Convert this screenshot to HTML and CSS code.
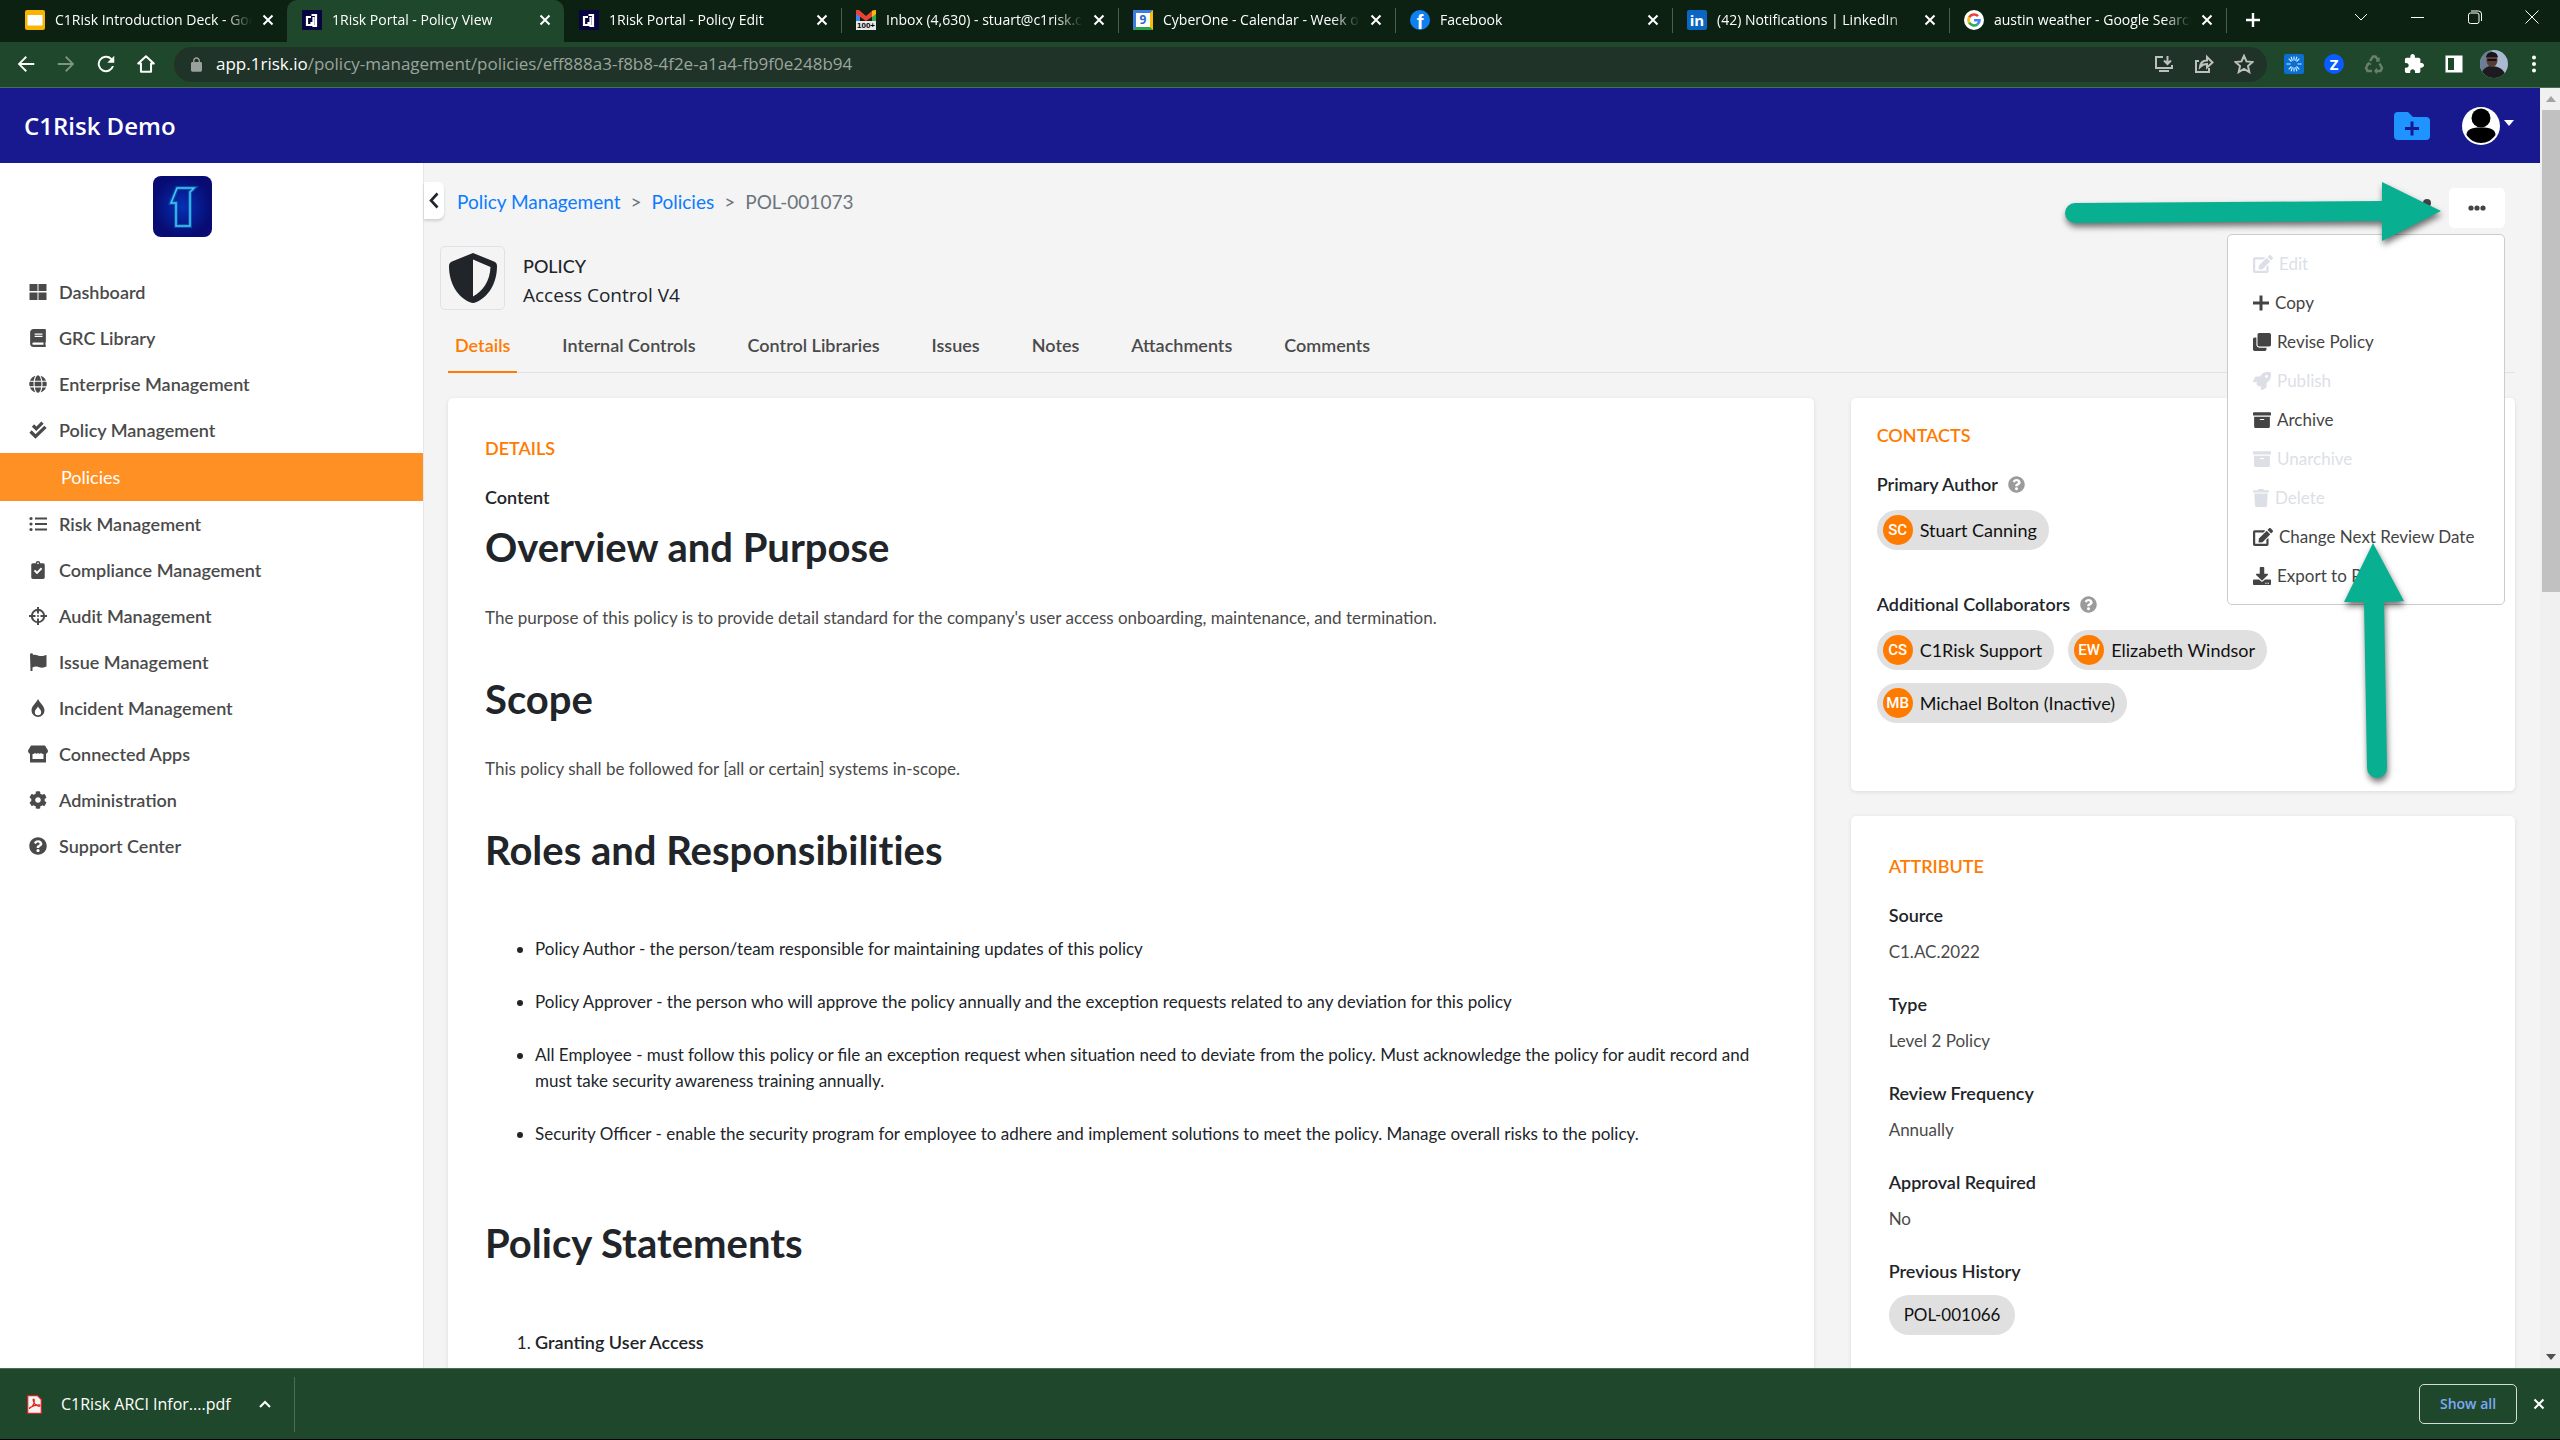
FILE: index.html
```
<!DOCTYPE html>
<html lang="en">
<head>
<meta charset="utf-8">
<title>1Risk Portal - Policy View</title>
<link rel="stylesheet" href="styles.css">
</head>
<body>
<svg class="sprite" aria-hidden="true">
  <symbol id="i-x" viewBox="0 0 12 12"><path d="M1.500 1.500l9 9M10.500 1.500l-9 9" stroke="currentColor" stroke-width="2" fill="none"/></symbol>
  <symbol id="i-help" viewBox="0 0 512 512"><path d="M504 256c0 137-111 248-248 248S8 393 8 256C8 119 119 8 256 8s248 111 248 248zM262.700 90c-54.500 0-89.300 23-116.600 63.800-3.500 5.300-2.400 12.400 2.700 16.200l34.700 26.300c5.200 4 12.600 3 16.700-2.100 17.900-22.700 30.100-35.800 57.300-35.800 20.400 0 45.700 13.100 45.700 33 0 15-12.400 22.700-32.500 34C247.100 238.500 216 254.900 216 296v4c0 6.600 5.400 12 12 12h56c6.600 0 12-5.400 12-12v-1.300c0-28.500 83.200-29.600 83.200-106.700 0-58-60.200-102-116.500-102zM256 338c-25.400 0-46 20.600-46 46 0 25.400 20.600 46 46 46s46-20.600 46-46c0-25.400-20.600-46-46-46z"/></symbol>
  <symbol id="i-edit" viewBox="0 0 576 512"><path d="M402.600 83.200l90.200 90.200c3.800 3.800 3.800 10 0 13.800L274.400 405.600l-92.800 10.300c-12.400 1.400-22.900-9.100-21.500-21.500l10.300-92.800L388.800 83.200c3.800-3.800 10-3.800 13.800 0zm162-22.900l-48.800-48.800c-15.200-15.200-39.900-15.200-55.200 0l-35.400 35.400c-3.800 3.800-3.800 10 0 13.800l90.200 90.200c3.800 3.800 10 3.800 13.800 0l35.400-35.400c15.200-15.300 15.200-40 0-55.200zM384 346.200V448H64V128h229.800c3.200 0 6.200-1.300 8.500-3.500l40-40c7.600-7.600 2.200-20.500-8.500-20.500H48C21.500 64 0 85.500 0 112v352c0 26.500 21.500 48 48 48h352c26.500 0 48-21.500 48-48V306.200c0-10.700-12.900-16-20.500-8.500l-40 40c-2.200 2.300-3.500 5.300-3.500 8.500z"/></symbol>
  <symbol id="i-archive" viewBox="0 0 512 512"><path d="M32 448c0 17.700 14.300 32 32 32h384c17.700 0 32-14.300 32-32V160H32v288zm160-212c0-6.600 5.400-12 12-12h104c6.600 0 12 5.400 12 12v8c0 6.600-5.400 12-12 12H204c-6.600 0-12-5.400-12-12v-8zM480 32H32C14.300 32 0 46.300 0 64v48c0 8.800 7.200 16 16 16h480c8.800 0 16-7.200 16-16V64c0-17.700-14.300-32-32-32z"/></symbol>
</svg>

<header class="browser">
  <div class="tabstrip">
    <div class="tab first">
      <svg class="favicon" viewBox="0 0 20 20"><rect width="20" height="20" rx="2" fill="#f9b400"/><rect x="2.500" y="5" width="15" height="10.500" fill="#fff"/></svg>
      <span class="tab-title">C1Risk Introduction Deck - Google Slides</span>
      <button class="x" aria-label="Close tab"><svg><use href="#i-x"/></svg></button>
    </div>
    <div class="tab active">
      <svg class="favicon" viewBox="0 0 20 20"><rect width="20" height="20" fill="#07053f"/><path d="M9 7H5v8h4.500V12M9.500 5h4.500V16h-2.500V7" fill="none" stroke="#fff" stroke-width="2.200"/></svg>
      <span class="tab-title">1Risk Portal - Policy View</span>
      <button class="x" aria-label="Close tab"><svg><use href="#i-x"/></svg></button>
    </div>
    <div class="tab">
      <svg class="favicon" viewBox="0 0 20 20"><rect width="20" height="20" fill="#07053f"/><path d="M9 7H5v8h4.500V12M9.500 5h4.500V16h-2.500V7" fill="none" stroke="#fff" stroke-width="2.200"/></svg>
      <span class="tab-title">1Risk Portal - Policy Edit</span>
      <button class="x" aria-label="Close tab"><svg><use href="#i-x"/></svg></button>
    </div>
    <div class="tab divided">
      <span class="favicon gmail"><svg viewBox="0 0 20 11"><path d="M0 11V1l4 3v7z" fill="#4285f4"/><path d="M20 11V1l-4 3v7z" fill="#34a853"/><path d="M0 0h3l7 6 7-6h3v4l-10 7L0 4z" fill="#ea4335"/><path d="M16 1l4-1v4l-4 3z" fill="#fbbc04"/></svg><b>100+</b></span>
      <span class="tab-title">Inbox (4,630) - stuart@c1risk.com - Mail</span>
      <button class="x" aria-label="Close tab"><svg><use href="#i-x"/></svg></button>
    </div>
    <div class="tab divided">
      <span class="favicon calendar">9</span>
      <span class="tab-title">CyberOne - Calendar - Week of July</span>
      <button class="x" aria-label="Close tab"><svg><use href="#i-x"/></svg></button>
    </div>
    <div class="tab divided">
      <span class="favicon facebook">f</span>
      <span class="tab-title">Facebook</span>
      <button class="x" aria-label="Close tab"><svg><use href="#i-x"/></svg></button>
    </div>
    <div class="tab divided">
      <span class="favicon linkedin">in</span>
      <span class="tab-title">(42) Notifications | LinkedIn</span>
      <button class="x" aria-label="Close tab"><svg><use href="#i-x"/></svg></button>
    </div>
    <div class="tab divided">
      <svg class="favicon" viewBox="0 0 20 20"><circle cx="10" cy="10" r="10" fill="#fff"/><g fill="none" stroke-width="2.600"><path d="M14 6.200A5.500 5.500 0 0 0 5.200 7.300" stroke="#ea4335"/><path d="M5.200 7.300a5.500 5.500 0 0 0 0 5.400" stroke="#fbbc05"/><path d="M5.200 12.700A5.500 5.500 0 0 0 13.500 14.200" stroke="#34a853"/><path d="M13.500 14.200A5.500 5.500 0 0 0 15.500 10.300H10" stroke="#4285f4"/></g></svg>
      <span class="tab-title">austin weather - Google Search</span>
      <button class="x" aria-label="Close tab"><svg><use href="#i-x"/></svg></button>
    </div>
    <button class="newtab divided" aria-label="New tab"><svg viewBox="0 0 16 16"><path d="M8 1v14M1 8h14" stroke="#fff" stroke-width="2.400"/></svg></button>
    <div class="window-controls">
      <button aria-label="Search tabs"><svg viewBox="0 0 14 14"><path d="M1 4l6 6 6-6"/></svg></button>
      <button aria-label="Minimize"><svg viewBox="0 0 14 14"><path d="M0 7.500h13"/></svg></button>
      <button aria-label="Restore"><svg viewBox="0 0 14 14"><rect x=".5" y="3" width="10.500" height="10.500" rx="2"/><path d="M3 1h7.500a3 3 0 0 1 3 3v7"/></svg></button>
      <button aria-label="Close window"><svg viewBox="0 0 14 14"><path d="M.5.500l13 13M13.500.500l-13 13"/></svg></button>
    </div>
  </div>

  <div class="toolbar">
    <div class="nav-buttons">
      <button aria-label="Back"><svg viewBox="0 0 24 24"><path d="M21 11H6.800l6.200-6.200L11.600 3.400 3 12l8.600 8.600L13 19.200 6.800 13H21z"/></svg></button>
      <button aria-label="Forward" class="dim"><svg viewBox="0 0 24 24"><path d="M3 11h14.200L11 4.800l1.400-1.400L21 12l-8.600 8.600L11 19.200l6.200-6.200H3z"/></svg></button>
      <button aria-label="Reload"><svg viewBox="0 0 24 24"><path d="M18.400 5.600A9 9 0 1 0 20.700 14.300h-2.200A6.900 6.900 0 1 1 16.900 7.100L13.400 10.600H21V3z"/></svg></button>
      <button aria-label="Home"><svg viewBox="0 0 24 24"><path d="M12 3.500l8.500 8h-3V20.500h-11V11.500h-3z" fill="none" stroke="currentColor" stroke-width="2.200" stroke-linejoin="round"/></svg></button>
    </div>
    <div class="omnibox">
      <svg class="lock" viewBox="4 1 16 21"><path d="M18 8h-1V6c0-2.760-2.240-5-5-5S7 3.240 7 6v2H6c-1.100 0-2 .9-2 2v10c0 1.100.9 2 2 2h12c1.100 0 2-.9 2-2V10c0-1.100-.9-2-2-2zM9 6c0-1.660 1.340-3 3-3s3 1.340 3 3v2H9z"/></svg>
      <span class="url"><span class="host">app.1risk.io</span>/policy-management/policies/eff888a3-f8b8-4f2e-a1a4-fb9f0e248b94</span>
      <button aria-label="Install app"><svg viewBox="0 0 20 20"><path d="M9 3H2v11h16v-3M5 17h10M13.500 2v7M10 6.500l3.500 3.500L17 6.500"/></svg></button>
      <button aria-label="Share"><svg viewBox="0 0 20 20"><path d="M5 7H2v11h13v-4M6 13c.5-4 3-6.500 7-6.500V3l5.500 5.500L13 13.500V10c-3 0-5 .8-7 3z"/></svg></button>
      <button aria-label="Bookmark"><svg viewBox="0 0 20 20"><path d="M10 1.800l2.500 5.600 6 .6-4.500 4.100 1.300 6L10 15l-5.300 3.100 1.300-6L1.500 8l6-.6z"/></svg></button>
    </div>
    <div class="extensions">
      <button aria-label="Claap"><svg viewBox="0 0 20 20"><rect width="20" height="20" rx="2" fill="#0a6fd0"/><g stroke="#d7efff" stroke-width="1.100"><path d="M10 2.500v4M10 13.500v4M2.500 10h4M13.500 10h4M4.700 4.700l2.800 2.800M12.500 12.500l2.800 2.800M15.300 4.700l-2.800 2.800M7.500 12.500l-2.800 2.800M7 2.800l1.500 3.800M13 2.800l-1.500 3.800M7 17.200l1.500-3.800M13 17.200l-1.500-3.800"/></g></svg></button>
      <button aria-label="Zoom"><span class="zoom-ext">Z</span></button>
      <button aria-label="Recycle"><svg viewBox="0 0 20 20" fill="none" stroke="#6b7f70" stroke-width="2.400"><path d="M6 7l3-4.500h2.500L14 6M4.500 9.500L2 14l1.500 3H8M15.500 9.500L18 14l-1.500 3h-5" fill="none"/><path d="M12 7h3V3.500M7 10.500L4.500 9 2.500 11M13 14.500L11 17l2 2.500" stroke-width="1.500" fill="none"/></svg></button>
      <button aria-label="Extensions"><svg viewBox="1 1 22 22" fill="#fff"><path d="M20.500 11H19V7c0-1.100-.9-2-2-2h-4V3.500C13 2.120 11.880 1 10.500 1S8 2.120 8 3.500V5H4c-1.100 0-1.990.9-1.990 2v3.800H3.500c1.490 0 2.700 1.210 2.700 2.700s-1.210 2.700-2.700 2.700H2V20c0 1.100.9 2 2 2h3.800v-1.500c0-1.490 1.210-2.700 2.700-2.700 1.490 0 2.700 1.210 2.700 2.700V22H17c1.100 0 2-.9 2-2v-4h1.500c1.380 0 2.500-1.120 2.500-2.500S21.880 11 20.500 11z"/></svg></button>
      <button aria-label="Side panel"><svg viewBox="0 0 20 20"><path d="M1.500 1.500h17v17h-17zM4 4v12h6V4z" fill="#fff" fill-rule="evenodd"/></svg></button>
      <button aria-label="Profile" class="profile"><svg viewBox="0 0 28 28"><clipPath id="pc"><circle cx="14" cy="14" r="14"/></clipPath><g clip-path="url(#pc)"><rect width="28" height="28" fill="#a9bad2"/><path d="M0 28V8L8 0h4v28z" fill="#6d7d93"/><path d="M1 28c0-8 4-11 9-12 10 0 15 4 16 12z" fill="#1d1a20"/><ellipse cx="12" cy="10" rx="5.500" ry="7" fill="#5a3a34"/><path d="M6 8c0-8 12-8 12 0l-1-1H7z" fill="#18151a"/><path d="M7.500 9h9v2h-9z" fill="#111"/></g></svg></button>
      <button aria-label="Menu"><svg viewBox="0 0 20 20" fill="#fff"><circle cx="10" cy="3.500" r="2"/><circle cx="10" cy="10" r="2"/><circle cx="10" cy="16.500" r="2"/></svg></button>
    </div>
  </div>
</header>

<div class="viewport">
<div class="app">
  <header class="app-header">
    <span class="brand">C1Risk Demo</span>
    <button class="folder" aria-label="New item"><svg viewBox="0 0 36 28"><path d="M4 0h10l5 5h13a4 4 0 0 1 4 4v15a4 4 0 0 1-4 4H4a4 4 0 0 1-4-4V4a4 4 0 0 1 4-4z" fill="#1f93ff"/><path d="M18 9.500v14M11 16.500h14" stroke="#19198f" stroke-width="3"/></svg></button>
    <button class="user" aria-label="Account"><svg class="user-pic" viewBox="0 0 38 38"><circle cx="19" cy="19" r="19" fill="#fff"/><circle cx="19" cy="11" r="9.500" fill="#000"/><path d="M4.500 28c0-6 6-7.500 14.500-7.500S33.500 22 33.500 28C30 33 25 36 19 36S8 33 4.500 28z" fill="#000"/></svg><svg class="caret" viewBox="0 0 10 6"><path d="M0 0h10L5 6z" fill="#fff"/></svg></button>
  </header>

  <div class="app-body">
    <aside class="sidebar">
      <svg class="logo" viewBox="0 0 59 61">
        <defs><radialGradient id="lg"><stop offset="0" stop-color="#0630b4"/><stop offset="1" stop-color="#070b72"/></radialGradient></defs>
        <rect width="59" height="61" rx="8" fill="url(#lg)"/>
        <path d="M24 12h17l-4 4v34H23V27h-5z" fill="none" stroke="#1478d8" stroke-width="4" opacity=".5"/>
        <path d="M24 12h17l-4 4v34H23V27h-5z" fill="none" stroke="#45cde8" stroke-width="1.500"/>
      </svg>
      <nav class="side-nav">
        <a href="#"><svg viewBox="0 0 18 18"><path d="M.5 1h8v7h-8zM9.500 1h8v7h-8zM.5 9.500h8V17h-8zM9.500 9.500h8V17h-8z"/></svg>Dashboard</a>
        <a href="#"><svg viewBox="0 0 448 512"><path d="M448 360V24c0-13.300-10.700-24-24-24H96C43 0 0 43 0 96v320c0 53 43 96 96 96h328c13.300 0 24-10.700 24-24v-16c0-7.500-3.500-14.300-8.900-18.700-4.200-15.400-4.200-59.300 0-74.700 5.400-4.300 8.900-11.100 8.900-18.600zM128 134c0-3.300 2.700-6 6-6h212c3.300 0 6 2.700 6 6v20c0 3.300-2.700 6-6 6H134c-3.300 0-6-2.700-6-6v-20zm0 64c0-3.300 2.700-6 6-6h212c3.300 0 6 2.700 6 6v20c0 3.300-2.700 6-6 6H134c-3.300 0-6-2.700-6-6v-20zm253.400 250H96c-17.700 0-32-14.300-32-32 0-17.600 14.400-32 32-32h285.400c-1.900 17.100-1.900 46.900 0 64z"/></svg>GRC Library</a>
        <a href="#"><svg viewBox="0 0 496 512"><path d="M336.500 160C322 70.700 287.800 8 248 8s-74 62.700-88.500 152h177zM152 256c0 22.200 1.200 43.500 3.300 64h185.300c2.100-20.500 3.300-41.800 3.300-64s-1.200-43.500-3.300-64H155.300c-2.100 20.500-3.300 41.800-3.300 64zm324.700-96c-28.600-67.900-86.500-120.400-158-141.600 24.400 33.800 41.200 84.700 50 141.600h108zM177.200 18.400C105.800 39.600 47.800 92.100 19.300 160h108c8.700-56.900 25.500-107.800 49.900-141.600zM487.400 192H372.700c2.100 21 3.300 42.500 3.300 64s-1.200 43-3.300 64h114.600c5.500-20.500 8.600-41.800 8.600-64s-3.100-43.500-8.500-64zM120 256c0-21.500 1.200-43 3.300-64H8.600C3.200 212.500 0 233.800 0 256s3.200 43.500 8.600 64h114.600c-2-21-3.200-42.500-3.200-64zm39.500 96c14.500 89.300 48.700 152 88.500 152s74-62.700 88.500-152h-177zm159.300 141.600c71.400-21.200 129.400-73.700 158-141.600h-108c-8.800 56.900-25.600 107.800-50 141.600zM19.300 352c28.600 67.900 86.500 120.400 158 141.600-24.400-33.800-41.200-84.700-50-141.600h-108z"/></svg>Enterprise Management</a>
        <a href="#"><svg viewBox="0 0 18 18"><path d="M4 4.500l3.300 3.300L13.500 1.600M1.500 10.500l5 5L16.500 5.800" fill="none" stroke="currentColor" stroke-width="3.200"/></svg>Policy Management</a>
        <a href="#" class="current">Policies</a>
        <a href="#"><svg viewBox="0 0 18 18"><circle cx="2" cy="3.500" r="1.600"/><circle cx="2" cy="9" r="1.600"/><circle cx="2" cy="14.500" r="1.600"/><path d="M6 2.500h12v2H6zM6 8h12v2H6zM6 13.500h12v2H6z"/></svg>Risk Management</a>
        <a href="#"><svg viewBox="0 0 384 512"><path fill-rule="evenodd" d="M336 64h-80a64 64 0 0 0-128 0H48C21.500 64 0 85.500 0 112v352c0 26.500 21.500 48 48 48h288c26.500 0 48-21.500 48-48V112c0-26.500-21.500-48-48-48zM192 40a24 24 0 1 1 0 48 24 24 0 0 1 0-48zM72 286l40-40 52 52 110-110 40 40-150 150z"/></svg>Compliance Management</a>
        <a href="#"><svg viewBox="0 0 18 18"><g fill="none" stroke="currentColor" stroke-width="2"><circle cx="9" cy="9" r="6.200"/><path d="M9 0v6.500M9 11.500V18M0 9h6.500M11.500 9H18"/></g><circle cx="9" cy="9" r="1"/></svg>Audit Management</a>
        <a href="#"><svg viewBox="0 0 18 18"><path d="M1 1.500a1.500 1.500 0 0 1 3 .5c2.500-.9 4.500.5 7 1 2 .4 4.500-.5 6.500-1v11.500c-2.500 1.300-5 1.500-8 .5-2-.6-4-.5-6 .4V18H1.500z"/></svg>Issue Management</a>
        <a href="#"><svg viewBox="0 0 18 18"><path fill-rule="evenodd" d="M9 0c1.500 3.500 6.500 7 6.500 11.500a6.500 6.500 0 0 1-13 0C2.500 7 7.500 3.500 9 0zm0 7.500c-1 2-3.200 3.500-3.200 5.500a3.200 3.200 0 0 0 6.400 0c0-2-2.200-3.500-3.200-5.500z"/></svg>Incident Management</a>
        <a href="#"><svg viewBox="0 0 20 18"><path fill-rule="evenodd" d="M3 .5h14l3 5c0 2-1 3-2 3.200V17.500H2V8.700C1 8.500 0 7.500 0 5.500zM4.500 9v5h11V9c-1 0-2-.5-2.500-1-1 1-2 1-3 0-1 1-2 1-3 0-.5.500-1.500 1-2.500 1z"/></svg>Connected Apps</a>
        <a href="#"><svg viewBox="0 0 512 512"><path d="M487.400 315.700l-42.600-24.600c4.300-23.200 4.300-47 0-70.200l42.600-24.600c4.900-2.800 7.100-8.600 5.500-14-11.100-35.600-30-67.800-54.700-94.600-3.800-4.100-10-5.100-14.800-2.300L380.800 110c-17.900-15.400-38.500-27.300-60.800-35.100V25.800c0-5.600-3.900-10.500-9.400-11.700-36.700-8.200-74.300-7.800-109.200 0-5.500 1.200-9.400 6.100-9.400 11.700V75c-22.200 7.900-42.800 19.800-60.800 35.100L88.700 85.500c-4.900-2.800-11-1.900-14.800 2.300-24.700 26.700-43.600 58.900-54.700 94.600-1.700 5.400.6 11.200 5.500 14L67.300 221c-4.300 23.200-4.300 47 0 70.200l-42.600 24.600c-4.900 2.800-7.100 8.600-5.500 14 11.100 35.600 30 67.800 54.700 94.600 3.800 4.100 10 5.100 14.800 2.300l42.600-24.600c17.900 15.400 38.500 27.300 60.800 35.100v49.200c0 5.600 3.900 10.500 9.400 11.700 36.700 8.200 74.300 7.800 109.200 0 5.500-1.200 9.400-6.100 9.400-11.700v-49.200c22.200-7.900 42.800-19.800 60.800-35.100l42.600 24.600c4.900 2.800 11 1.900 14.800-2.300 24.700-26.700 43.600-58.900 54.700-94.600 1.500-5.500-.7-11.300-5.600-14.100zM256 336c-44.100 0-80-35.900-80-80s35.900-80 80-80 80 35.900 80 80-35.900 80-80 80z"/></svg>Administration</a>
        <a href="#"><svg><use href="#i-help"/></svg>Support Center</a>
      </nav>
    </aside>

    <main class="content">
      <button class="collapse" aria-label="Collapse sidebar"><svg viewBox="0 0 10 16"><path d="M8.500 1L2 8l6.500 7" fill="none" stroke="#212529" stroke-width="2.600"/></svg></button>
      <div class="page-top">
        <nav class="breadcrumb"><a href="#">Policy Management</a><span>&gt;</span><a href="#">Policies</a><span>&gt;</span><span>POL-001073</span></nav>
        <div class="actions">
          <button class="share" aria-label="Share"><svg viewBox="0 0 16 18"><circle cx="10" cy="4" r="4"/><circle cx="3" cy="9" r="3"/><circle cx="10" cy="14" r="3"/></svg></button>
          <button class="more" aria-label="More actions"><svg viewBox="0 0 18 6"><circle cx="3" cy="3" r="2.600"/><circle cx="9" cy="3" r="2.600"/><circle cx="15" cy="3" r="2.600"/></svg></button>
          <div class="dropdown">
            <button disabled><svg class="w20"><use href="#i-edit"/></svg>Edit</button>
            <button><svg class="w16" viewBox="0 0 16 18"><path d="M6.500 1.500h3v6H16v3H9.500v6h-3v-6H0v-3h6.500z"/></svg>Copy</button>
            <button><svg class="w18" viewBox="0 0 512 512"><path d="M464 0c26.500 0 48 21.500 48 48v288c0 26.500-21.500 48-48 48H176c-26.500 0-48-21.500-48-48V48c0-26.500 21.500-48 48-48h288M176 416c-44.100 0-80-35.900-80-80V128H48c-26.500 0-48 21.500-48 48v288c0 26.500 21.500 48 48 48h288c26.500 0 48-21.500 48-48v-48H176z"/></svg>Revise Policy</button>
            <button disabled><svg class="w18" viewBox="0 0 512 512"><path d="M505 19c-1.200-5.500-6.600-11-12.200-12.200C460.700 0 435.500 0 410.400 0 307.200 0 245.300 55.200 199 128H94.800c-16.300 0-35.500 11.900-42.900 26.500L2.500 253.300A28.400 28.400 0 0 0 0 264a24 24 0 0 0 24 24h103.800l-22.500 22.500c-11.300 11.300-13 32.200 0 45.200l50.900 50.900c11.200 11.200 32.200 13.200 45.300 0l22.500-22.400V488a24 24 0 0 0 24 24 28.600 28.600 0 0 0 10.700-2.500l98.700-49.400c14.700-7.300 26.600-26.500 26.600-42.900V312.800C456.600 266.500 512 204.400 512 101.700c0-25.200 0-50.400-7-82.700zM384 168a40 40 0 1 1 40-40 40 40 0 0 1-40 40z"/></svg>Publish</button>
            <button><svg class="w18"><use href="#i-archive"/></svg>Archive</button>
            <button disabled><svg class="w18"><use href="#i-archive"/></svg>Unarchive</button>
            <button disabled><svg class="w16" viewBox="0 0 448 512"><path d="M432 32H312l-9.400-18.700A24 24 0 0 0 281.100 0H166.800a23.700 23.700 0 0 0-21.400 13.300L136 32H16A16 16 0 0 0 0 48v32a16 16 0 0 0 16 16h416a16 16 0 0 0 16-16V48a16 16 0 0 0-16-16zM32 128l21.200 339a48 48 0 0 0 47.900 45h245.800a48 48 0 0 0 47.900-45L416 128z"/></svg>Delete</button>
            <button><svg class="w20"><use href="#i-edit"/></svg>Change Next Review Date</button>
            <button><svg class="w18" viewBox="0 0 512 512"><path d="M216 0h80c13.300 0 24 10.700 24 24v168h87.700c17.800 0 26.700 21.500 14.100 34.100L269.700 378.300c-7.500 7.500-19.800 7.500-27.300 0L90.100 226.100c-12.600-12.600-3.700-34.100 14.100-34.100H192V24c0-13.300 10.700-24 24-24zm296 376v112c0 13.300-10.700 24-24 24H24c-13.300 0-24-10.700-24-24V376c0-13.300 10.700-24 24-24h146.700l49 49c20.100 20.100 52.500 20.100 72.600 0l49-49H488c13.300 0 24 10.700 24 24zm-124 88c0-11-9-20-20-20s-20 9-20 20 9 20 20 20 20-9 20-20zm64 0c0-11-9-20-20-20s-20 9-20 20 9 20 20 20 20-9 20-20z"/></svg>Export to PDF</button>
          </div>
          <svg class="pointers" viewBox="0 0 450 610" aria-hidden="true">
            <path d="M20 23L327 21V2L386 31 327 61V41L20 43A10 10 0 0 1 20 23z"/>
            <path d="M318 363L349 421 329 422 332 588A10 10 0 0 1 312 588L309 422 289 422z"/>
          </svg>
        </div>
      </div>

      <div class="record">
        <div class="record-icon"><svg viewBox="0 0 48 50"><path d="M24 0l21 8.500c2 .8 3 2.500 3 4.500 0 18-9 31-21 36.300-2 .9-4 .9-6 0C9 44 0 31 0 13c0-2 1-3.700 3-4.500zM24 6.500v37C34 38 41 28 41.500 14z" fill="#212529" fill-rule="evenodd"/></svg></div>
        <div><div class="record-type">POLICY</div><div class="record-name">Access Control V4</div></div>
      </div>

      <nav class="tabs">
        <a href="#" class="on">Details</a><a href="#">Internal Controls</a><a href="#">Control Libraries</a><a href="#">Issues</a><a href="#">Notes</a><a href="#">Attachments</a><a href="#">Comments</a>
      </nav>

      <div class="columns">
        <article class="card document">
          <h2 class="section">DETAILS</h2>
          <h3 class="label">Content</h3>
          <h1>Overview and Purpose</h1>
          <p>The purpose of this policy is to provide detail standard for the company's user access onboarding, maintenance, and termination.</p>
          <h1>Scope</h1>
          <p>This policy shall be followed for [all or certain] systems in-scope.</p>
          <h1>Roles and Responsibilities</h1>
          <ul>
            <li>Policy Author - the person/team responsible for maintaining updates of this policy</li>
            <li>Policy Approver - the person who will approve the policy annually and the exception requests related to any deviation for this policy</li>
            <li>All Employee - must follow this policy or file an exception request when situation need to deviate from the policy. Must acknowledge the policy for audit record and must take security awareness training annually.</li>
            <li>Security Officer - enable the security program for employee to adhere and implement solutions to meet the policy. Manage overall risks to the policy.</li>
          </ul>
          <h1>Policy Statements</h1>
          <ol><li><strong>Granting User Access</strong></li></ol>
        </article>

        <div class="side">
          <section class="card contacts">
            <h2 class="section">CONTACTS</h2>
            <h3 class="label">Primary Author <svg><use href="#i-help"/></svg></h3>
            <div class="chips"><span class="chip"><b>SC</b>Stuart Canning</span></div>
            <h3 class="label">Additional Collaborators <svg><use href="#i-help"/></svg></h3>
            <div class="chips"><span class="chip"><b>CS</b>C1Risk Support</span><span class="chip"><b>EW</b>Elizabeth Windsor</span><span class="chip"><b>MB</b>Michael Bolton (Inactive)</span></div>
          </section>
          <section class="card attributes">
            <h2 class="section">ATTRIBUTE</h2>
            <dl>
              <dt>Source</dt><dd>C1.AC.2022</dd>
              <dt>Type</dt><dd>Level 2 Policy</dd>
              <dt>Review Frequency</dt><dd>Annually</dd>
              <dt>Approval Required</dt><dd>No</dd>
              <dt>Previous History</dt><dd><a href="#" class="chip plain">POL-001066</a></dd>
            </dl>
          </section>
        </div>
      </div>
    </main>
  </div>
</div>
<div class="scrollbar" aria-hidden="true">
  <svg viewBox="0 0 12 8"><path d="M6 1l5 6H1z" fill="#a3a3a3"/></svg>
  <div class="track"><div class="thumb"></div></div>
  <svg viewBox="0 0 12 8"><path d="M6 7l5-6H1z" fill="#505050"/></svg>
</div>
</div>

<footer class="downloads">
  <button class="file"><svg class="pdf" viewBox="0 0 15 19"><path d="M.7.700h9.800l3.800 3.800v13.800H.7z" fill="#f4f4f4" stroke="#d5241c" stroke-width="1.200"/><path d="M3 13c3-1.500 4.500-5 4.300-8-.1-1.300-1.300-1.300-1.200 0C6.300 8 9 11 12 11.300c1.300 0 1.200-1.500 0-1.500-3 0-6.500 1-9 2.700-1 .9-.5 1.300 0 .5z" fill="none" stroke="#e2261d" stroke-width="1.200"/></svg>C1Risk ARCI Infor....pdf</button>
  <button class="file-menu" aria-label="Download options"><svg viewBox="0 0 12 8"><path d="M1 7l5-5 5 5" fill="none" stroke="#fff" stroke-width="2"/></svg></button>
  <button class="show-all">Show all</button>
  <button class="x" aria-label="Close downloads bar"><svg><use href="#i-x"/></svg></button>
</footer>
</body>
</html>
```
FILE: styles.css
```
* { box-sizing: border-box; }

html { height: 100%; }

body {
  margin: 0;
  height: 100vh;
  display: flex;
  flex-direction: column;
  overflow: hidden;
  font: 17px/26px Lato, "Liberation Sans", sans-serif;
  color: #212529;
}

h1, h2, h3, p, ul, ol, dl, dd { margin: 0; }
a { text-decoration: none; }
button {
  display: flex;
  align-items: center;
  justify-content: center;
  padding: 0;
  border: 0;
  background: none;
  font: inherit;
  color: inherit;
}
svg { display: block; fill: currentColor; flex: none; }
.sprite { position: absolute; width: 0; height: 0; }

/* Browser chrome */
.browser, .downloads {
  flex: none;
  font-family: "Open Sans", "Noto Sans", sans-serif;
  font-size: 14px;
  color: #fff;
}
.tabstrip {
  display: flex;
  height: 42px;
  padding-left: 10px;
  background: #0d2113;
}
.tab {
  flex: 0 1 277px;
  min-width: 0;
  display: flex;
  align-items: center;
  gap: 10px;
  padding: 0 13px 3px 15px;
}
.tab.active { background: #1f472b; border-radius: 10px 10px 0 0; }
.divided {
  background: linear-gradient(#4b5d50, #4b5d50) left 8px / 1px 25px no-repeat;
}
.favicon {
  flex: none;
  width: 20px;
  height: 20px;
  line-height: 20px;
  text-align: center;
}
.gmail b {
  display: block;
  background: #e8e8e8;
  color: #000;
  font: 700 8px/9px "Liberation Sans", sans-serif;
}
.gmail svg { width: 20px; height: 11px; }
.calendar {
  border: solid #3b7de0;
  border-width: 3px;
  border-right-color: #fbbc04;
  border-bottom-color: #2fa24f;
  background: #fff;
  color: #2b66c9;
  font-size: 12px;
  font-weight: 700;
  line-height: 14px;
}
.facebook {
  border-radius: 50%;
  background: #0f80f2;
  font: 700 20px/24px "Liberation Sans", sans-serif;
}
.linkedin { border-radius: 2px; background: #0a66c2; font-weight: 700; font-size: 15px; }
.tab-title {
  flex: 1;
  overflow: hidden;
  white-space: nowrap;
  -webkit-mask-image: linear-gradient(90deg, #000 calc(100% - 28px), transparent);
  mask-image: linear-gradient(90deg, #000 calc(100% - 28px), transparent);
}
.x svg { width: 12px; height: 12px; }
.newtab { width: 54px; padding-bottom: 2px; }
.newtab svg { width: 16px; height: 16px; }
.window-controls { display: flex; margin-left: auto; padding-bottom: 8px; }
.window-controls button { width: 57px; }
.window-controls svg { width: 14px; height: 14px; fill: none; stroke: #fff; stroke-width: 1; }

.toolbar {
  display: flex;
  align-items: center;
  height: 46px;
  padding: 0 6px 1px;
  background: #1f472b;
  border-bottom: 1px solid #4b6c55;
}
.nav-buttons, .extensions { display: flex; align-items: center; }
.nav-buttons button, .extensions button { width: 40px; height: 34px; }
.nav-buttons svg { width: 22px; height: 22px; }
.nav-buttons { margin-right: 8px; }
.dim { color: #7e9585; }
.omnibox {
  flex: 1;
  display: flex;
  align-items: center;
  gap: 20px;
  height: 35px;
  padding: 0 13px 0 17px;
  border-radius: 18px;
  background: #203328;
  color: #bdc1be;
}
.omnibox button svg { width: 20px; height: 20px; fill: none; stroke: currentColor; stroke-width: 2; }
.omnibox .lock { width: 11px; height: 15px; margin-right: -6px; color: #9aa09c; }
.url { flex: 1; font-size: 17px; color: #9aa59d; white-space: nowrap; overflow: hidden; }
.host { color: #fff; }
.extensions { padding-left: 7px; }
.extensions svg { width: 20px; height: 20px; }
.zoom-ext {
  width: 20px;
  height: 20px;
  border-radius: 50%;
  background: #0b5cff;
  font-size: 15px;
  font-weight: 700;
  line-height: 20px;
}
.extensions .profile svg { width: 28px; height: 28px; }

/* Page viewport */
.viewport { flex: 1; min-height: 0; display: flex; }
.app { flex: 1; min-width: 0; display: flex; flex-direction: column; overflow: hidden; }
.scrollbar {
  flex: none;
  width: 20px;
  display: flex;
  flex-direction: column;
  align-items: center;
  gap: 7px;
  padding: 7px 0 7px 2px;
  background: #f0f0f0;
}
.scrollbar svg { width: 12px; height: 8px; }
.track { flex: 1; width: 100%; }
.thumb { height: 39%; background: #c1c1c1; }

.app-header {
  flex: none;
  display: flex;
  align-items: center;
  height: 75px;
  padding: 0 26px 0 24px;
  background: #19198f;
}
.brand {
  flex: 1;
  color: #fff;
  font: 600 24px/32px "Open Sans", "Noto Sans", sans-serif;
}
.folder svg { width: 36px; height: 28px; }
.user { margin-left: 32px; gap: 4px; }
.user-pic { width: 38px; height: 38px; }
.user .caret { width: 10px; height: 6px; margin-bottom: 6px; }

.app-body { flex: 1; min-height: 0; display: flex; }

/* Sidebar */
.sidebar {
  flex: none;
  width: 424px;
  padding-top: 13px;
  background: #fff;
  border-right: 1px solid #e6e6e6;
}
.logo { width: 59px; height: 61px; margin: 0 0 32px 153px; }
.side-nav a {
  display: flex;
  align-items: center;
  gap: 11px;
  height: 46px;
  padding-left: 28px;
  font-size: 18px;
  font-weight: 600;
  color: #4a4a4a;
}
.side-nav svg { width: 20px; height: 18px; }
.side-nav .current {
  height: 48px;
  padding-left: 61px;
  background: #ff9124;
  color: #fff;
  font-weight: 400;
}

/* Content */
.content {
  position: relative;
  flex: 1;
  min-width: 0;
  display: flex;
  flex-direction: column;
  padding: 25px 25px 0 24px;
  background: #f4f4f4;
}
.collapse {
  position: absolute;
  left: 0;
  top: 19px;
  width: 20px;
  height: 37px;
  border-radius: 0 6px 6px 0;
  background: #fff;
  box-shadow: 0 2px 3px rgba(0, 0, 0, .15);
}
.collapse svg { width: 10px; height: 17px; }
.page-top {
  flex: none;
  display: flex;
  justify-content: space-between;
  height: 40px;
  padding: 0 10px 0 9px;
}
.breadcrumb { display: flex; gap: 10px; font-size: 19px; line-height: 28px; color: #6c757d; }
.breadcrumb a { color: #0d7bff; }
.actions { position: relative; display: flex; gap: 16px; color: #444; }
.share svg { width: 16px; height: 18px; }
.more { width: 56px; height: 40px; border-radius: 5px; background: #fff; }
.more svg { width: 18px; height: 6px; }
.dropdown {
  position: absolute;
  z-index: 2;
  right: 0;
  top: 46px;
  width: 278px;
  padding: 9px 0;
  border: 1px solid #ccc;
  border-radius: 5px;
  background: #fff;
}
.dropdown button {
  width: 100%;
  height: 39px;
  justify-content: flex-start;
  gap: 6px;
  padding-left: 25px;
}
.dropdown button:disabled { color: #dcdfe6; }
.w16, .w18, .w20 { height: 18px; }
.w16 { width: 16px; }
.w18 { width: 18px; }
.w20 { width: 20px; }
.pointers {
  position: absolute;
  z-index: 3;
  right: 0;
  top: -8px;
  width: 450px;
  height: 610px;
  fill: #08af91;
  filter: drop-shadow(1px 4px 3px rgba(0, 0, 0, .55));
  pointer-events: none;
}

.record { flex: none; display: flex; align-items: flex-end; gap: 18px; margin: 18px 0 0 -8px; }
.record-icon {
  display: flex;
  align-items: center;
  justify-content: center;
  width: 65px;
  height: 64px;
  border: 1px solid #dee2e6;
  border-radius: 5px;
}
.record-icon svg { width: 48px; height: 50px; }
.record-type, .record-name { line-height: 29px; }
.record-type { font-size: 18px; font-weight: 500; }
.record-name { font: 500 19px/29px "Open Sans", "Noto Sans", sans-serif; }

.tabs { flex: none; display: flex; gap: 38px; border-bottom: 1px solid #dee2e6; }
.tabs a {
  margin-bottom: -1px;
  padding: 22px 7px 13px;
  border-bottom: 2px solid transparent;
  font-size: 18px;
  font-weight: 600;
  color: #4a4a4a;
}
.tabs .on { color: #ff7b00; border-color: #ff7b00; }

.columns {
  flex: 1;
  display: grid;
  grid-template-columns: repeat(12, minmax(0, 1fr));
  gap: 37px;
  margin-top: 25px;
}
.card {
  background: #fff;
  border-radius: 5px;
  box-shadow: 0 1px 4px rgba(0, 0, 0, .1);
}
.document { grid-column: span 8; padding: 37px 36px 0 37px; border-radius: 5px 5px 0 0; }
.side { grid-column: span 4; display: flex; flex-direction: column; gap: 25px; }
.section { font-size: 18px; font-weight: 600; line-height: 26px; color: #ff7b00; }
.label {
  display: flex;
  align-items: center;
  gap: 10px;
  margin-top: 23px;
  font-size: 18px;
  font-weight: 600;
  line-height: 26px;
}
.label svg { width: 17px; height: 17px; color: #9b9b9b; }

.document h1 {
  margin-top: 44px;
  font-size: 40px;
  font-weight: 700;
  line-height: 48px;
  font-variant-ligatures: none;
}
.document .label + h1 { margin-top: 13px; }
.document p { margin-top: 33px; color: #4a4a4a; }
.document .label + h1 + p { margin-top: 34px; }
.document ul, .document ol { margin-top: 62px; padding-left: 50px; }
.document li + li { margin-top: 27px; }
.document ul + h1 { margin-top: 72px; }
.document strong { font-size: 18px; font-weight: 600; }

.contacts { padding: 24px 26px 68px; }
.chips { display: flex; flex-wrap: wrap; gap: 13px 14px; margin-top: 13px; }
.chips + .label { margin-top: 41px; }
.chip {
  display: inline-flex;
  align-items: center;
  gap: 7px;
  height: 40px;
  padding: 0 12px 0 6px;
  border-radius: 20px;
  background: #e0e0e0;
  color: #111;
  font-size: 18px;
}
.chip b {
  width: 30px;
  height: 30px;
  border-radius: 50%;
  background: #ff7b00;
  color: #fff;
  font: 500 15px/30px Roboto, sans-serif;
  text-align: center;
}
.chip.plain { padding: 0 15px; font-size: 17px; }
.attributes { flex: 1; padding: 37px 38px 0; border-radius: 5px 5px 0 0; }
dt { margin-top: 26px; font-size: 18px; font-weight: 600; }
dt:first-child { margin-top: 23px; }
dd { margin-top: 11px; color: #4a4a4a; }

/* Downloads bar */
.downloads {
  display: flex;
  align-items: center;
  height: 72px;
  padding: 0 15px 0 27px;
  border-top: 1px solid #4b6c55;
  border-bottom: 1px solid #000;
  background: #1f472b;
}
.file { gap: 19px; font-size: 16px; }
.pdf { width: 15px; height: 19px; }
.file-menu {
  width: 64px;
  height: 55px;
  margin-right: auto;
  padding-left: 6px;
  border-right: 1px solid #4b6c55;
}
.file-menu svg { width: 12px; height: 8px; }
.show-all {
  width: 98px;
  height: 40px;
  margin-right: 16px;
  border: 1px solid #d5dcd7;
  border-radius: 5px;
  color: #7baaf7;
  font-weight: 600;
}
```
